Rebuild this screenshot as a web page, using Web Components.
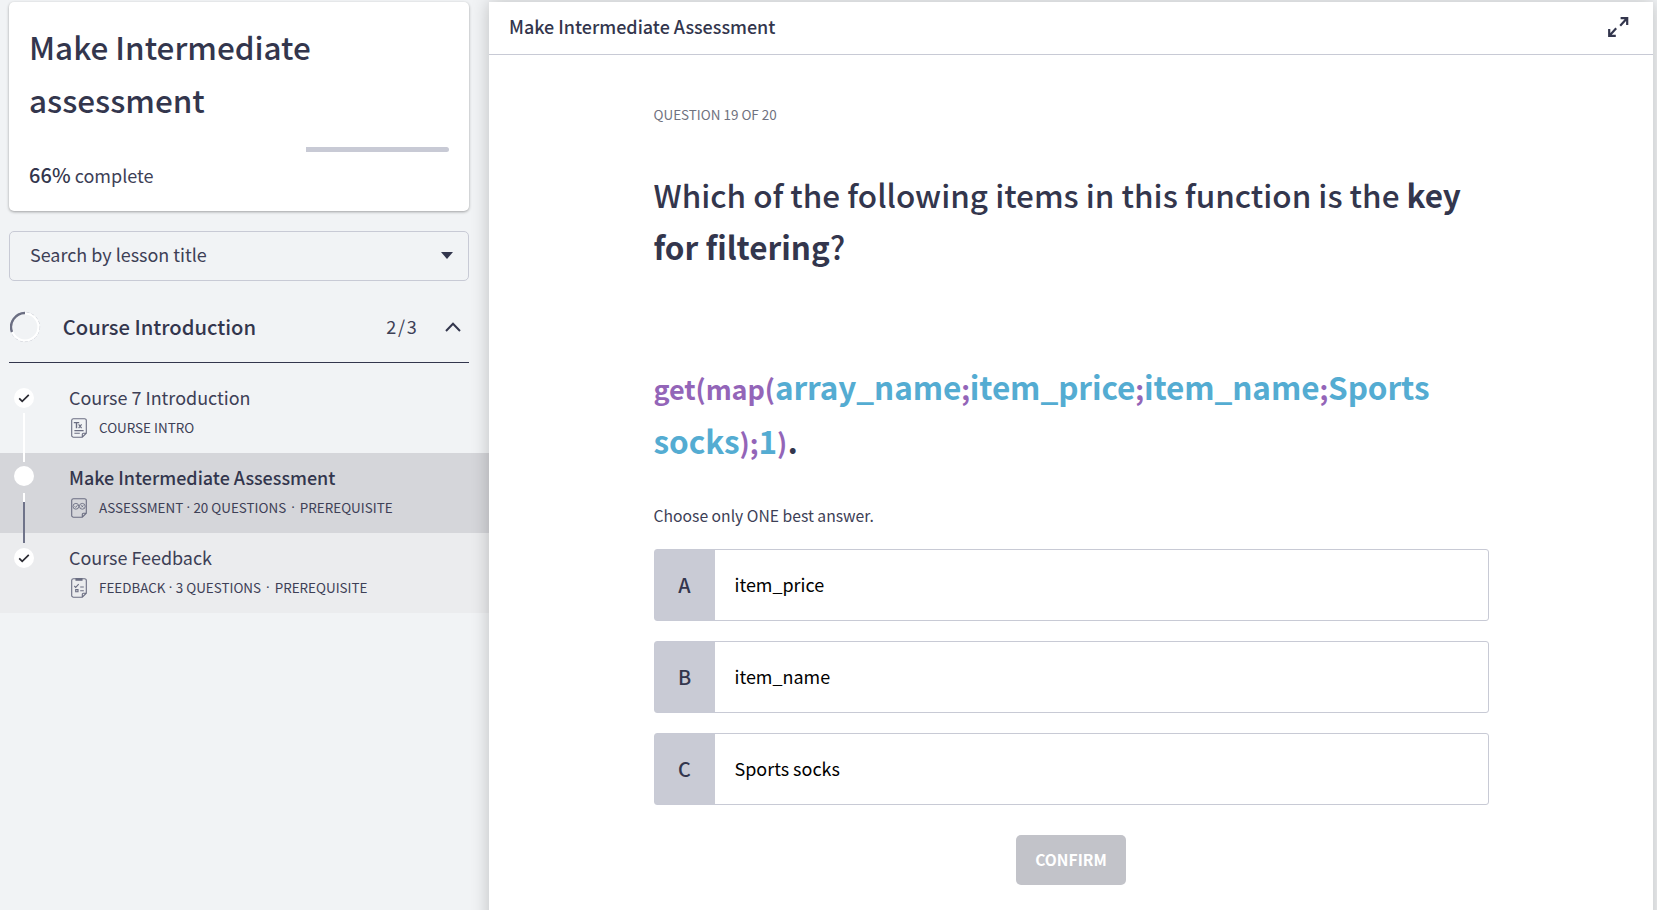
<!DOCTYPE html>
<html lang="en">
<head>
<meta charset="utf-8">
<title>Make Intermediate Assessment</title>
<style>
html,body{margin:0;height:100%;overflow:hidden}
body{font-family:"Noto Sans CJK SC","Noto Sans",sans-serif;color:#33364d;background:#f1f3f5;--line:#c8cad5;--soft:#3d4056}
</style>
</head>
<body>
<course-app>
  <course-card slot="side" percent="66">Make Intermediate assessment</course-card>
  <lesson-search slot="side">Search by lesson title</lesson-search>
  <course-section slot="side" heading="Course Introduction" count="2/3">
    <lesson-item state="done" place="first" kind="text" meta="COURSE INTRO">Course 7 Introduction</lesson-item>
    <lesson-item state="current" place="middle" kind="quiz" meta="ASSESSMENT|20 QUESTIONS" extra="PREREQUISITE">Make Intermediate Assessment</lesson-item>
    <lesson-item state="done" place="last" kind="survey" meta="FEEDBACK|3 QUESTIONS" extra="PREREQUISITE">Course Feedback</lesson-item>
  </course-section>
  <lesson-header>Make Intermediate Assessment</lesson-header>
  <quiz-question label="QUESTION 19 OF 20" hint="Choose only ONE best answer.">
    <span slot="title">Which of the following items in this function is the <b>key</b><br><b>for filtering</b>?</span>
    <formula-line slot="formula"></formula-line>
    <answer-option letter="A">item_price</answer-option>
    <answer-option letter="B">item_name</answer-option>
    <answer-option letter="C">Sports socks</answer-option>
    <confirm-button slot="action">CONFIRM</confirm-button>
  </quiz-question>
</course-app>
<script>
const define = (name, render) => customElements.define(name, class extends HTMLElement {
  connectedCallback() {
    if (this.shadowRoot) return;
    this.attachShadow({mode: 'open'}).innerHTML = render(this);
  }
});
const attr = (el, n) => el.getAttribute(n) || '';

define('course-app', () => `
<style>
:host{display:grid;grid-template-columns:489px 1fr;height:100vh;overflow:hidden}
aside{padding-top:2px;min-width:0}
main{margin:2px 4px 0 0;background:#fff;box-shadow:0 0 17px rgba(0,0,0,.22);position:relative;height:930px}
</style>
<aside><slot name="side"></slot></aside><main><slot></slot></main>`);

define('course-card', el => `
<style>
:host{display:block;box-sizing:border-box;margin:0 20px 0 9px;height:209px;padding:18px 20px 0;background:#fff;border-radius:5px;box-shadow:0 1px 3px rgba(0,0,0,.35)}
h1{margin:0 0 21px;font-size:31.45px;font-weight:500;line-height:53px;width:340px}
.bar{height:5px;border-radius:3px;background:linear-gradient(90deg,#fff 66%,var(--line) 66%)}
p{margin:8px 0 0;font-size:18px;line-height:30px;white-space:nowrap;color:var(--soft)}
b{font-weight:500;font-size:19.9px;letter-spacing:.1px;color:#33364d}
</style>
<h1><slot></slot></h1><div class="bar"></div><p><b>${attr(el,'percent')}%</b> complete</p>`);

define('lesson-search', () => `
<style>
:host{display:flex;justify-content:space-between;align-items:center;box-sizing:border-box;height:50px;margin:20px 20px 0 9px;padding:0 15px 0 20px;border:1px solid var(--line);border-radius:5px;font-size:17.95px;color:var(--soft)}
span{line-height:43px;padding-bottom:4px}
svg{display:block;margin-bottom:1px}
</style>
<span><slot></slot></span><svg width="12" height="7"><path d="M0 0h12L6 7z" fill="#33364d"/></svg>`);

define('course-section', el => `
<style>
:host{display:block;margin-top:11px}
header{display:flex;align-items:center;height:70px;margin:0 20px 10px 9px;border-bottom:1px solid #33364d}
h2{margin:0 auto 0 20.7px;font-size:20.2px;font-weight:500;line-height:40px;padding-bottom:1px}
.n{font-size:18px;letter-spacing:1.7px;margin-right:26.5px;padding-bottom:2px;color:var(--soft)}
svg{display:block}
.chev{margin:0 8px 1px 0}
.ring{margin-left:1px}
</style>
<header>
<svg class="ring" width="32" height="32" fill="none"><circle cx="15" cy="16" r="14.6" stroke="#b9bbc5" stroke-width=".7" stroke-dasharray="3 2"/><circle cx="15" cy="16" r="13.5" stroke="#fff" stroke-width="2.2"/><path d="M2 21A14 14 0 0 1 15 2" stroke="#6b6e82" stroke-width="2.4"/></svg>
<h2>${attr(el,'heading')}</h2><span class="n">${attr(el,'count')}</span>
<svg class="chev" width="16" height="10" fill="none"><path d="M1 9l7-7.2L15 9" stroke="#33364d" stroke-width="2"/></svg>
</header><slot></slot>`);

const page = '<path d="M2.5.7h11a1.8 1.8 0 0 1 1.8 1.8v12.7l-4 4H2.5a1.8 1.8 0 0 1-1.8-1.8v-15A1.8 1.8 0 0 1 2.5.7zM15.2 15.2h-2.7a1.2 1.2 0 0 0-1.2 1.2v2.7"/>';
const icons = {
  text: page + '<path d="M2.8 4.6h5.4M5.5 4.6v5.6" stroke-width="1.4"/><path d="M7.6 6.4l3 3.8M10.6 6.4l-3 3.8M3.4 12.6h9.2M3.4 15.2h5.4"/>',
  quiz: page + '<g stroke-width=".9"><circle cx="4.9" cy="8.3" r="2.9"/><circle cx="11.3" cy="8.3" r="2.9"/><path d="M3.5 8.3l1.1 1.1 1.9-2.2M10.3 7.3l2 2M12.3 7.3l-2 2"/></g>',
  survey: page + '<path d="M5 .2h6v1.9H5z" fill="#6b6e82"/><path d="M3.3 8l1.4 1.4 3-3.2M9.2 9h3.6M4.7 11.6h2.3v2.2H4.7zM9.2 12.8h3.6"/>'
};

define('lesson-item', el => {
  const place = attr(el,'place'), done = attr(el,'state') === 'done';
  const dot = (w = '') => `<i class="d ${w}">·</i>`;
  return `
<style>
:host{display:grid;grid-template-columns:69px 1fr;height:80px;color:var(--soft)}
:host([state=current]){background:#d5d6da}
:host([place=last]){background:#ebecee}
:host([state=current]) h3{font-weight:500;color:#33364d}
.rail{display:flex;flex-direction:column;align-items:center;width:48px}
.dot{flex:none;width:20px;height:20px;border-radius:50%;background:#fff}
.dot svg{display:block}
.l{flex:none;width:2px;background:#fff}
.g{background:#6f7389}
h3{margin:10px 0 4px;font-size:17.95px;font-weight:400;line-height:28px;white-space:nowrap}
.meta{display:flex;align-items:center;height:24px;font-size:13.43px;line-height:24px;white-space:pre}
.meta svg{display:block;margin:2px 12px 0 2px}
.d{font-style:normal;font-family:"Noto Sans";width:10.2px;text-align:center}
.w{width:13.6px}
</style>
<div class="rail">${
  place === 'first' ? '<div style="height:15px"></div>' :
  place === 'middle' ? '<div class="l" style="height:9px;margin-bottom:4px"></div>' :
  '<div class="l g" style="height:10px;margin-bottom:5px"></div>'}
<div class="dot">${done ? '<svg width="20" height="20" fill="none"><path d="M5.2 10.4l3 3L14.8 6.8" stroke="#2b2b33" stroke-width="1.7"/></svg>' : ''}</div>${
  place === 'first' ? '<div class="l" style="height:40px;margin-top:5px"></div>' :
  place === 'middle' ? '<div class="l" style="height:9px;margin-top:7px"></div><div class="l g" style="height:31px"></div>' : ''}
</div>
<div><h3><slot></slot></h3><div class="meta"><svg width="16" height="20" fill="none" stroke="#6b6e82" stroke-width="1.1">${icons[attr(el,'kind')]}</svg>${
  attr(el,'meta').split('|').map(t => `<span>${t}</span>`).join(dot())}${
  el.hasAttribute('extra') ? dot('w') + `<span>${attr(el,'extra')}</span>` : ''}</div></div>`;
});

define('lesson-header', () => `
<style>
:host{display:flex;justify-content:space-between;height:52px;padding:0 24px 0 20px;border-bottom:1px solid var(--line);font-size:17.95px;font-weight:500;line-height:48px}
svg{display:block;margin-top:15px}
</style>
<span><slot></slot></span>
<svg width="21" height="20" fill="none" stroke="#33364d" stroke-width="2.2"><path d="M12.6 1.2H19.2V8M18.8 1.6l-6.6 7.2M1.2 12v6.8H7.8M1.6 18.4l6.6-7.2"/></svg>`);

define('quiz-question', el => `
<style>
:host{display:block;width:835px;padding:47px 0 0 164.5px}
.label{font-size:13.45px;line-height:24px;color:#6f7280}
h1{margin:42px 0 88px;font-size:31.48px;font-weight:500;line-height:52px;white-space:nowrap}
.hint{margin:35px 0 19px;font-size:15.7px;line-height:28px;color:var(--soft)}
.opts{display:grid;gap:20px}
.act{display:flex;justify-content:center;margin-top:30px}
</style>
<div class="label">${attr(el,'label')}</div>
<h1><slot name="title"></slot></h1>
<slot name="formula"></slot>
<div class="hint">${attr(el,'hint')}</div>
<div class="opts"><slot></slot></div>
<div class="act"><slot name="action"></slot></div>`);

define('formula-line', () => `
<style>
:host{display:block;font-size:31.5px;font-weight:700;line-height:53.5px;letter-spacing:-.09px;color:#54acd2;white-space:nowrap}
i{font-style:normal;font-size:27px;line-height:1;color:#9365b8}
b{font-size:27px;line-height:1;color:#33364d;margin-left:1px}
</style>
<i>get(map(</i>array_name<i>;</i>item_price<i>;</i>item_name<i>;</i>Sports<br>socks<i>);</i>1<i>)</i><b>.</b>`);

define('answer-option', el => `
<style>
:host{display:flex;box-sizing:border-box;height:72px;border:1px solid var(--line);border-radius:3px;font-size:17.95px;line-height:69px;color:#000}
.k{width:60px;background:#c9cbd5;text-align:center;font-size:19.8px;font-weight:500;color:#33364d}
.t{padding-left:20px}
</style>
<div class="k">${attr(el,'letter')}</div><div class="t"><slot></slot></div>`);

define('confirm-button', () => `
<style>
:host{display:block;width:110px;height:50px;border-radius:5px;background:#c2c3c9;color:#fff;text-align:center;font-size:15.6px;font-weight:700;line-height:49px}
</style><slot></slot>`);
</script>
</body>
</html>
